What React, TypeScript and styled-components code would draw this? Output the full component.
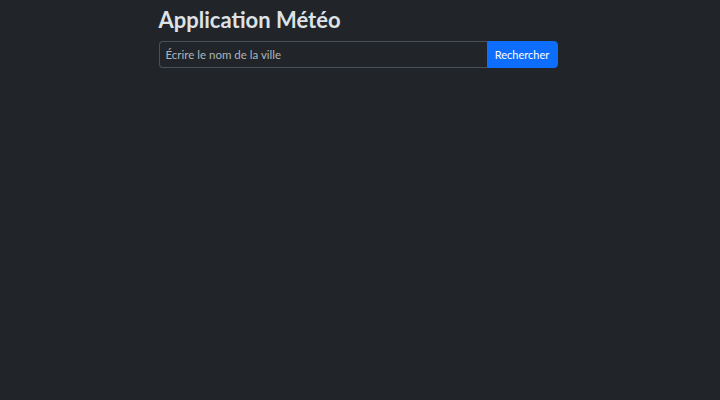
import styled, { createGlobalStyle } from "styled-components"
import { useState } from "react"

const GlobalStyle = createGlobalStyle`
  html, body {
    margin: 0;
    background: #212529;
    color: #dee2e6;
    font-family: Lato, "Noto Sans", sans-serif;
  }
  body {
    min-height: 400px;
  }
`

function App() {
  const [city, setCity] = useState("")
  return (
    <>
      <GlobalStyle />
      <Container>
        <Title>Application Météo</Title>
        <SearchForm onSubmit={(e) => e.preventDefault()}>
          <CityInput
            type="text"
            placeholder="Écrire le nom de la ville"
            value={city}
            onChange={(e) => setCity(e.target.value)}
          />
          <SearchButton type="submit">Rechercher</SearchButton>
        </SearchForm>
      </Container>
    </>
  )
}

const Container = styled.div`
  width: 399px;
  margin: 0 auto;
  padding-top: 4px;
  position: relative;
  left: -2px;
`

const Title = styled.h1`
  font-size: 22px;
  font-weight: 700;
  line-height: 32px;
  margin: 0 0 5px 0;
  color: #dee2e6;
`

const SearchForm = styled.form`
  display: flex;
  align-items: stretch;
  height: 27px;
`

const CityInput = styled.input`
  flex: 1;
  min-width: 0;
  box-sizing: border-box;
  background: #212529;
  border: 1px solid #495057;
  border-right: none;
  border-radius: 4px 0 0 4px;
  padding: 0 6px;
  font: inherit;
  font-size: 11.5px;
  color: #dee2e6;
  outline: none;

  &::placeholder {
    color: #adb5bd;
  }
`

const SearchButton = styled.button`
  width: 71px;
  box-sizing: border-box;
  background: #0d6efd;
  border: 1px solid #0d6efd;
  border-radius: 0 4px 4px 0;
  color: #fff;
  font: inherit;
  font-size: 11px;
  padding: 0;
  cursor: pointer;
`

export default App
